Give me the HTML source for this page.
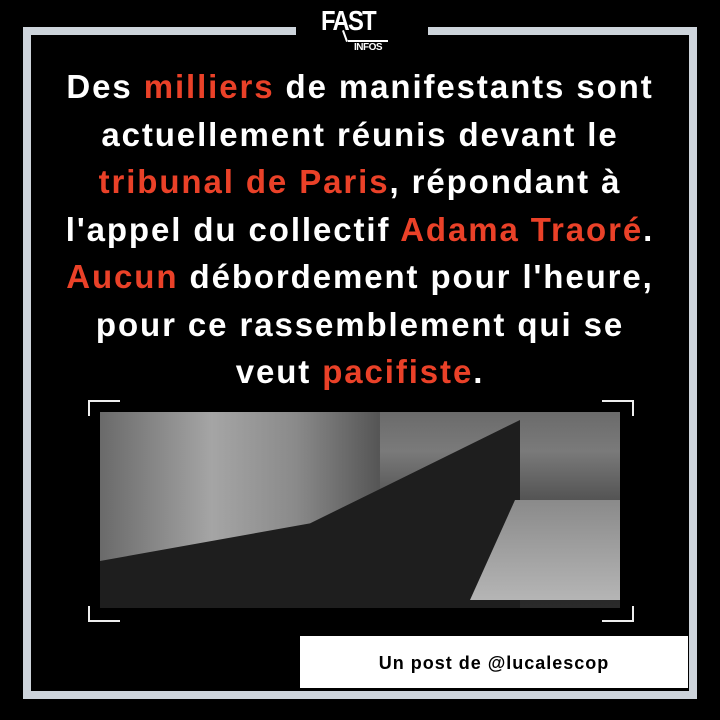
<!DOCTYPE html>
<html><head><meta charset="utf-8"><style>
html,body{margin:0;padding:0;background:#000;}
body{width:720px;height:720px;position:relative;overflow:hidden;font-family:"Liberation Sans","DejaVu Sans",sans-serif;}
.frame{position:absolute;left:23px;top:27px;width:658px;height:656px;border:8px solid #cdd4db;}
.gap{position:absolute;left:296px;top:20px;width:132px;height:20px;background:#000;}
.logo{position:absolute;left:321px;top:5px;color:#fff;font-weight:bold;font-size:28px;letter-spacing:-2px;transform:scaleX(0.85);transform-origin:left;}
.infos{position:absolute;left:354px;top:42px;color:#fff;font-size:10px;font-weight:bold;letter-spacing:-0.5px;}
.lline{position:absolute;left:344px;top:30px;width:2px;height:12px;background:#fff;transform:rotate(-20deg);}
.lh{position:absolute;left:348px;top:40px;width:40px;height:2px;background:#fff;}
.text{position:absolute;left:0;width:720px;top:63px;text-align:center;color:#fff;font-weight:bold;font-size:33px;letter-spacing:1.9px;line-height:47.5px;}
.r{color:#ea4128;}
.img{position:absolute;left:100px;top:412px;width:520px;height:196px;background:linear-gradient(180deg,#6b6b6b 0%,#7a7a7a 20%,#444 55%,#222 75%,#2a2a2a 100%);}
.bld{position:absolute;left:100px;top:412px;width:280px;height:150px;background:linear-gradient(90deg,#6a6a6a,#a5a5a5 40%,#8a8a8a 70%,#555);}
.crowd{position:absolute;left:100px;top:420px;width:420px;height:188px;background:#1e1e1e;clip-path:polygon(0 75%,50% 55%,100% 0,100% 100%,0 100%);}
.plat{position:absolute;left:470px;top:500px;width:150px;height:100px;background:linear-gradient(180deg,#8a8a8a,#b5b5b5);clip-path:polygon(30% 0,100% 0,100% 100%,0 100%);}
.br{position:absolute;width:30px;height:14px;border-color:#eee;border-style:solid;border-width:0;}
.box{position:absolute;left:300px;top:636px;width:388px;height:52px;background:#fff;text-align:center;line-height:54px;font-size:18px;letter-spacing:1px;font-weight:bold;color:#000;}
</style></head><body>
<div class="frame"></div>
<div class="gap"></div>
<div class="logo">FAST</div>
<div class="lline"></div><div class="lh"></div>
<div class="infos">INFOS</div>
<div class="text">Des <span class="r">milliers</span> de manifestants sont<br>actuellement réunis devant le<br><span class="r">tribunal de Paris</span>, répondant à<br>l'appel du collectif <span class="r">Adama Traoré</span>.<br><span class="r">Aucun</span> débordement pour l'heure,<br>pour ce rassemblement qui se<br>veut <span class="r">pacifiste</span>.</div>
<div class="img"></div>
<div class="bld"></div>
<div class="crowd"></div>
<div class="plat"></div>
<div class="br" style="left:88px;top:400px;border-top-width:2px;border-left-width:2px;"></div>
<div class="br" style="left:602px;top:400px;border-top-width:2px;border-right-width:2px;"></div>
<div class="br" style="left:88px;top:606px;border-bottom-width:2px;border-left-width:2px;"></div>
<div class="br" style="left:602px;top:606px;border-bottom-width:2px;border-right-width:2px;"></div>
<div class="box">Un post de @lucalescop</div>
</body></html>
